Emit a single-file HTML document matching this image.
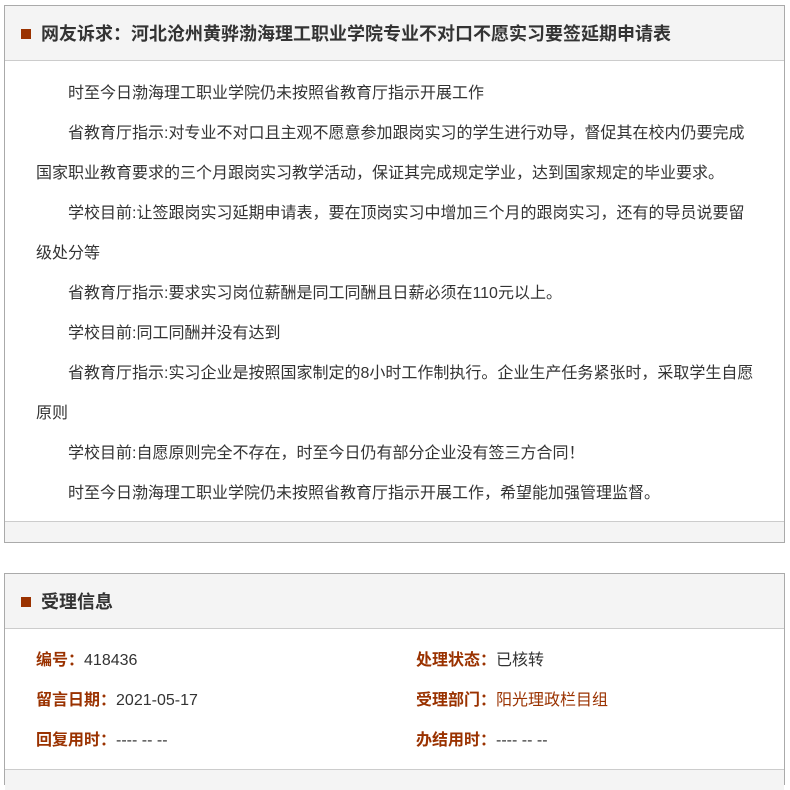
<!DOCTYPE html>
<html><head><meta charset="utf-8"><style>
body{margin:0;background:#fff;font-family:"Liberation Sans","Noto Sans CJK SC",sans-serif;color:#333;width:790px;height:773px;overflow:hidden;position:relative}
.panel{position:absolute;left:4px;width:779px;border:1px solid #aaa;background:#fff}
.hd{height:54px;background:#f4f4f4;border-bottom:1px solid #ccc;position:relative}
.hd i{position:absolute;left:16px;top:23px;width:10px;height:10px;background:#9a3200}
.hd b{position:absolute;left:36px;top:0;line-height:56px;font-size:18px;color:#333}
.bd{padding:13px 0 8px 31px;font-size:16px;line-height:40px;white-space:nowrap}
.bd p{margin:0}
.ft{height:20px;background:#f4f4f4;border-top:1px solid #ccc}
.row{position:absolute;font-size:16px;line-height:20px}
.row span{color:#9a3200;font-weight:bold}
</style></head><body>
<div class="panel" style="top:5px;height:536px">
<div class="hd"><i></i><b>网友诉求：河北沧州黄骅渤海理工职业学院专业不对口不愿实习要签延期申请表</b></div>
<div class="bd">
<p>&emsp;&emsp;时至今日渤海理工职业学院仍未按照省教育厅指示开展工作</p>
<p>&emsp;&emsp;省教育厅指示:对专业不对口且主观不愿意参加跟岗实习的学生进行劝导，督促其在校内仍要完成<br>国家职业教育要求的三个月跟岗实习教学活动，保证其完成规定学业，达到国家规定的毕业要求。</p>
<p>&emsp;&emsp;学校目前:让签跟岗实习延期申请表，要在顶岗实习中增加三个月的跟岗实习，还有的导员说要留<br>级处分等</p>
<p>&emsp;&emsp;省教育厅指示:要求实习岗位薪酬是同工同酬且日薪必须在110元以上。</p>
<p>&emsp;&emsp;学校目前:同工同酬并没有达到</p>
<p>&emsp;&emsp;省教育厅指示:实习企业是按照国家制定的8小时工作制执行。企业生产任务紧张时，采取学生自愿<br>原则</p>
<p>&emsp;&emsp;学校目前:自愿原则完全不存在，时至今日仍有部分企业没有签三方合同！</p>
<p>&emsp;&emsp;时至今日渤海理工职业学院仍未按照省教育厅指示开展工作，希望能加强管理监督。</p>
</div>
<div class="ft" style="position:absolute;left:0;right:0;bottom:0"></div>
</div>
<div class="panel" style="top:573px;height:210px">
<div class="hd"><i></i><b>受理信息</b></div>
<div class="row" style="left:31px;top:77px"><span>编号：</span>418436</div>
<div class="row" style="left:31px;top:117px"><span>留言日期：</span>2021-05-17</div>
<div class="row" style="left:31px;top:157px"><span>回复用时：</span>---- -- --</div>
<div class="row" style="left:411px;top:77px"><span>处理状态：</span>已核转</div>
<div class="row" style="left:411px;top:117px"><span>受理部门：</span><em style="font-style:normal;color:#9a3200">阳光理政栏目组</em></div>
<div class="row" style="left:411px;top:157px"><span>办结用时：</span>---- -- --</div>
<div class="ft" style="position:absolute;left:0;right:0;top:195px"></div>
</div>
</body></html>
